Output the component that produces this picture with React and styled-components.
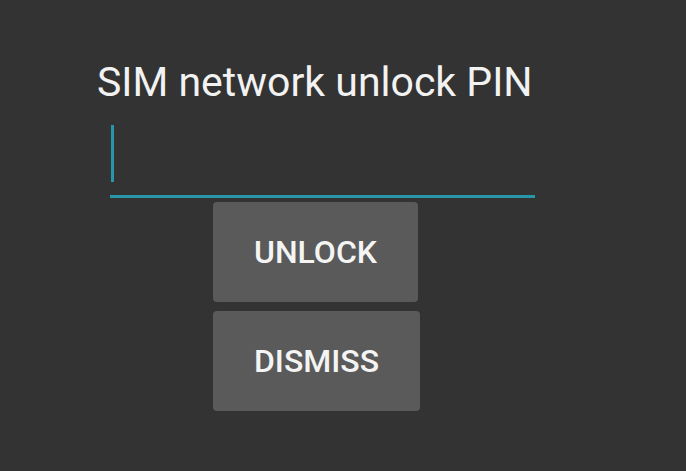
import React from "react";
import styled, { createGlobalStyle } from "styled-components";

const Global = createGlobalStyle`
  html, body { margin: 0; padding: 0; background: #333333; }
  body { font-family: Roboto, "Noto Sans", sans-serif; }
`;

const Screen = styled.div`
  width: 686px;
  height: 471px;
  background: #333333;
  display: flex;
  flex-direction: column;
  padding: 58px 0 0 97px;
  box-sizing: border-box;
`;

const Title = styled.div`
  color: #f2f2f2;
  font-size: 41px;
  line-height: 48px;
  font-weight: 400;
  white-space: nowrap;
`;

const Field = styled.div`
  margin: 19px 0 0 13px;
  width: 425px;
  height: 70px;
  border-bottom: 3px solid #2796a8;
  display: flex;
  align-items: flex-start;
`;

const Caret = styled.div`
  width: 3px;
  height: 57px;
  margin-left: 1px;
  background: #2796a8;
`;

const Buttons = styled.div`
  margin: 4px 0 0 116px;
  display: flex;
  flex-direction: column;
  gap: 9px;
`;

const Button = styled.button`
  width: ${(p) => p.$w}px;
  height: 100px;
  border: none;
  border-radius: 4px;
  background: #5a5a5a;
  color: #f4f4f4;
  font-family: Roboto, sans-serif;
  font-size: 32px;
  font-weight: 500;
  display: flex;
  align-items: center;
  justify-content: center;
  padding: 0;
`;

export default function App() {
  return (
    <>
      <Global />
      <Screen>
        <Title>SIM network unlock PIN</Title>
        <Field>
          <Caret />
        </Field>
        <Buttons>
          <Button $w={205}>UNLOCK</Button>
          <Button $w={207}>DISMISS</Button>
        </Buttons>
      </Screen>
    </>
  );
}
